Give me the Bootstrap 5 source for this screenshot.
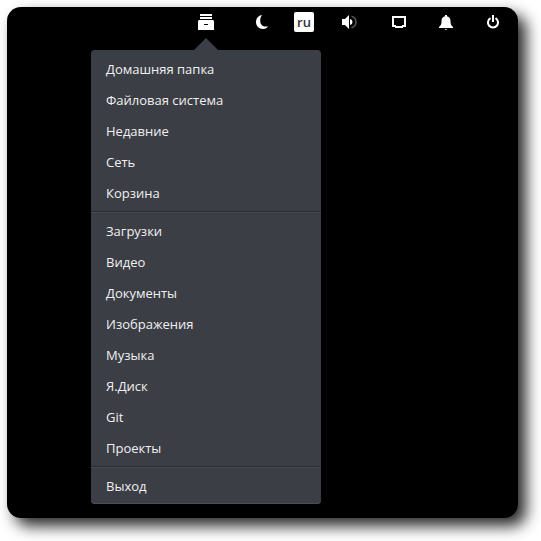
<!DOCTYPE html>
<html lang="ru">
<head>
<meta charset="utf-8">
<meta name="viewport" content="width=device-width, initial-scale=1">
<title>Меню</title>
<link href="https://cdn.jsdelivr.net/npm/bootstrap@5.3.0/dist/css/bootstrap.min.css" rel="stylesheet">
<style>
body{background:#fff;font-family:"Open Sans","Noto Sans",sans-serif;font-size:13px;height:541px;padding:7px;overflow:hidden}
.desk{width:511px;height:511px;background:#000;border-radius:14px;box-shadow:8px 8px 15px rgba(0,0,0,.85)}
.panel{height:30px;padding-left:191px}
.panel svg{display:block}
.g1{margin-right:42px}.g2{margin-right:26px}.g3{margin-right:28px}.g4{margin-right:35px}.g5{margin-right:33px}.g6{margin-right:34px}
.lang{width:20px;height:20px;border-radius:2px;background:#fff;color:#333;font-weight:600;font-size:13px;line-height:20px}
.arrow-tip{display:block;margin:1px 0 0 187px}
.places{width:230px;height:454px;margin-left:84px;padding:4px 0;background:#3c3e46;border-radius:4px;box-shadow:inset 0 -1px #4a4d55}
.places .dropdown-item{height:31px;line-height:31px;padding:0 15px;color:#f0f0f0}
.sep{height:2px;margin:2px 0 3px;background:linear-gradient(#2b2d33 50%,#484b53 50%)}
</style>
</head>
<body>
<main class="desk">
<nav class="panel d-flex align-items-center">
<svg class="g1" width="16" height="16" viewBox="0 0 16 16"><path fill="#fff" fill-rule="evenodd" d="M2 0h12v2H2zM2 3h12v2H2zM1 6h14l1 1v9H0V7zM6 10v1h4v-1z"/></svg>
<svg class="g2" width="12" height="14" viewBox="0 0 12 14"><path fill="#fff" d="M6 0C2.500.6 0 3.300 0 7c0 4 3 7 7 7 2.500 0 4.500-1.300 5-2.800C8 12.500 4.200 10.200 4.200 6 4.200 3.500 4.800 1.500 6 0z"/></svg>
<span class="lang g3 text-center">ru</span>
<svg class="g4" width="15" height="14" viewBox="0 0 15 14"><path fill="#fff" d="M0 4h3L7 0v14L3 10H0zM8 4q2.500.6 2.500 3T8 10z"/><path fill="none" stroke="#555" stroke-width="1.500" d="M9.500 1.200C12.500 2 14 4 14 7s-1.500 5-4.500 5.800"/></svg>
<svg class="g5" width="14" height="12" viewBox="0 0 14 12"><path fill="#fff" fill-rule="evenodd" d="M0 0h14v11h-3v1H3v-1H0zM2 2v7h2v1h6V9h2V2z"/></svg>
<svg class="g6" width="14" height="15" viewBox="0 0 14 15"><path fill="#fff" d="M6 0h2v1.200c2.500.6 3.500 2.400 3.500 4.800 0 3 .5 4.500 2.500 6v1H0v-1c2-1.500 2.500-3 2.500-6 0-2.400 1-4.200 3.500-4.800zM5.500 14h3L7 15z"/></svg>
<svg width="12" height="14" viewBox="0 0 12 14"><path fill="none" stroke="#fff" stroke-width="2" d="M3.500 3.200a5 5 0 1 0 5 0M6 0v7"/></svg>
</nav>
<svg class="arrow-tip" width="24" height="12" viewBox="0 0 24 12"><path fill="#3c3e46" d="M0 12 12 0l12 12z"/></svg>
<div class="places">
<a class="dropdown-item">Домашняя папка</a>
<a class="dropdown-item">Файловая система</a>
<a class="dropdown-item">Недавние</a>
<a class="dropdown-item">Сеть</a>
<a class="dropdown-item">Корзина</a>
<div class="sep"></div>
<a class="dropdown-item">Загрузки</a>
<a class="dropdown-item">Видео</a>
<a class="dropdown-item">Документы</a>
<a class="dropdown-item">Изображения</a>
<a class="dropdown-item">Музыка</a>
<a class="dropdown-item">Я.Диск</a>
<a class="dropdown-item">Git</a>
<a class="dropdown-item">Проекты</a>
<div class="sep"></div>
<a class="dropdown-item">Выход</a>
</div>
</main>
<script src="https://cdn.jsdelivr.net/npm/bootstrap@5.3.0/dist/js/bootstrap.bundle.min.js"></script>
</body>
</html>
